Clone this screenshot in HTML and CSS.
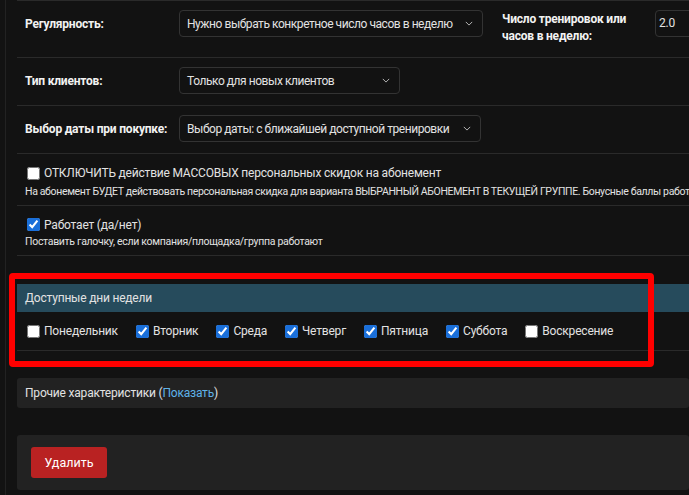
FILE: index.html
```html
<!DOCTYPE html>
<html lang="ru">
<head>
    <meta charset="UTF-8">
    <meta name="viewport" content="width=device-width, initial-scale=1.0">
    <title>Настройки абонемента</title>
    <link rel="stylesheet" href="styles.css">
</head>
<body>
    <div class="page">
        <div class="form-row tall">
            <div class="label">Регулярность:</div>
            <div class="select w1">
                <span>Нужно выбрать конкретное число часов в неделю</span>
                <svg viewBox="0 0 10 6" width="8" height="5"><path d="M1 1l4 4 4-4" fill="none" stroke="#bbb" stroke-width="1.2"/></svg>
            </div>
            <div class="label label-num">Число тренировок или часов в неделю:</div>
            <div class="input">2.0</div>
        </div>

        <div class="form-row">
            <div class="label">Тип клиентов:</div>
            <div class="select w2">
                <span>Только для новых клиентов</span>
                <svg viewBox="0 0 10 6" width="8" height="5"><path d="M1 1l4 4 4-4" fill="none" stroke="#bbb" stroke-width="1.2"/></svg>
            </div>
        </div>

        <div class="form-row">
            <div class="label">Выбор даты при покупке:</div>
            <div class="select w3">
                <span>Выбор даты: с ближайшей доступной тренировки</span>
                <svg viewBox="0 0 10 6" width="8" height="5"><path d="M1 1l4 4 4-4" fill="none" stroke="#bbb" stroke-width="1.2"/></svg>
            </div>
        </div>

        <div class="check-row">
            <label class="check"><input type="checkbox"> ОТКЛЮЧИТЬ действие МАССОВЫХ персональных скидок на абонемент</label>
            <div class="hint first">На абонемент БУДЕТ действовать персональная скидка для варианта ВЫБРАННЫЙ АБОНЕМЕНТ В ТЕКУЩЕЙ ГРУППЕ. Бонусные баллы работают</div>
        </div>

        <div class="check-row last">
            <label class="check"><input type="checkbox" checked> Работает (да/нет)</label>
            <div class="hint">Поставить галочку, если компания/площадка/группа работают</div>
        </div>

        <div class="days">
            <div class="days-head">Доступные дни недели</div>
            <div class="days-list">
                <label class="check"><input type="checkbox"> Понедельник</label>
                <label class="check"><input type="checkbox" checked> Вторник</label>
                <label class="check"><input type="checkbox" checked> Среда</label>
                <label class="check"><input type="checkbox" checked> Четверг</label>
                <label class="check"><input type="checkbox" checked> Пятница</label>
                <label class="check"><input type="checkbox" checked> Суббота</label>
                <label class="check"><input type="checkbox"> Воскресение</label>
            </div>
        </div>

        <div class="panel more">Прочие характеристики (<a href="#">Показать</a>)</div>

        <div class="panel actions">
            <button>Удалить</button>
        </div>
    </div>

    <div class="highlight"></div>
</body>
</html>
```

FILE: styles.css
```css
body {
    margin: 0;
    background-color: #121212;
    color: #e2e2e2;
    font-family: Roboto, "Noto Sans", sans-serif;
    font-size: 12px;
    letter-spacing: -0.2px;
    overflow: hidden;
}
.page {
    margin-left: 5px;
    border-left: 1px solid #222;
    padding-left: 11px;
    height: 495px;
    overflow: hidden;
}
.form-row {
    display: flex;
    align-items: flex-start;
    border-top: 1px solid #2a2a2a;
    padding: 9px 0 11px 8px;
    white-space: nowrap;
}
.form-row.tall {
    padding-bottom: 12px;
}
.label {
    width: 154px;
    flex-shrink: 0;
    font-weight: bold;
    color: #f2f2f2;
    line-height: 17px;
    padding-top: 6px;
}
.label-num {
    width: 140px;
    white-space: normal;
    padding-top: 1px;
    margin-left: 19px;
    margin-right: 13px;
}
.select {
    display: flex;
    align-items: center;
    justify-content: space-between;
    box-sizing: border-box;
    height: 27px;
    padding: 0 9px 0 7px;
    border: 1px solid #333;
    border-radius: 4px;
    flex-shrink: 0;
    overflow: hidden;
    letter-spacing: -0.45px;
}
.select.w1 { width: 304px; }
.select.w2 { width: 221px; }
.select.w3 { width: 302px; }
.input {
    box-sizing: border-box;
    width: 60px;
    height: 27px;
    padding: 5px 0 0 3px;
    border: 1px solid #333;
    border-radius: 4px;
    flex-shrink: 0;
}
.check-row {
    border-top: 1px solid #2a2a2a;
    padding: 10px 0 5px 8px;
    white-space: nowrap;
}
.check-row.last {
    border-bottom: 1px solid #2a2a2a;
}
.check {
    display: inline-flex;
    align-items: center;
    gap: 4px;
    line-height: 18px;
}
.check input {
    width: 13px;
    height: 13px;
    margin: 0 0 0 2px;
    accent-color: #1a6fd9;
}
.hint {
    font-size: 10.5px;
    letter-spacing: -0.3px;
    line-height: 16px;
}
.hint.first {
    margin-top: 1px;
    letter-spacing: -0.35px;
}
.days {
    margin-top: 28px;
    border-bottom: 1px solid #2a2a2a;
}
.days-head {
    background-color: #264b5c;
    padding: 0 8px;
    line-height: 28px;
}
.days-list {
    display: flex;
    gap: 16px;
    padding: 10px 8px 10px;
    white-space: nowrap;
}
.panel {
    background-color: #222;
    border-radius: 3px;
}
.more {
    margin-top: 27px;
    padding: 0 8px;
    line-height: 30px;
}
.more a {
    color: #5fb2e8;
    text-decoration: none;
}
.actions {
    margin-top: 27px;
    padding: 12px 14px;
}
button {
    background-color: #b92222;
    color: #fff;
    border: none;
    border-radius: 3px;
    font-family: inherit;
    font-size: 12.5px;
    width: 76px;
    height: 31px;
    padding: 0;
}
.highlight {
    position: absolute;
    left: 9px;
    top: 273px;
    width: 633px;
    height: 82px;
    border: 6px solid #ff0000;
    border-radius: 4px;
}
```
